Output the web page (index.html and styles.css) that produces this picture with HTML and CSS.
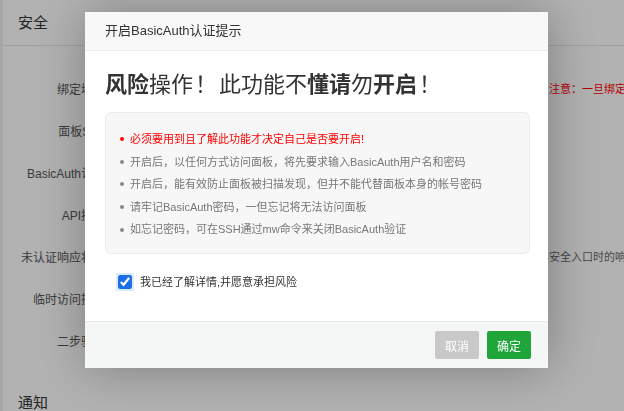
FILE: index.html
```html
<!DOCTYPE html>
<html lang="zh-CN">
<head>
    <meta charset="UTF-8">
    <title>面板设置</title>
    <link rel="stylesheet" href="styles.css">
</head>
<body>
    <div class="page">
        <div class="section">
            <div class="sectionTitle">安全</div>
            <div class="sectionBody">
                <div class="row">
                    <span class="label">绑定域名</span>
                    <span class="field fieldWide"></span>
                    <span class="desc descRed">注意：一旦绑定域名，只能通过域名访问面板！</span>
                </div>
                <div class="row">
                    <span class="label">面板SSL</span>
                </div>
                <div class="row">
                    <span class="label">BasicAuth认证</span>
                </div>
                <div class="row">
                    <span class="label">API接口</span>
                </div>
                <div class="row">
                    <span class="label">未认证响应状态</span>
                    <span class="field fieldSelect"></span>
                    <span class="desc">未登录或访问非安全入口时的响应状态</span>
                </div>
                <div class="row">
                    <span class="label">临时访问授权</span>
                </div>
                <div class="row">
                    <span class="label">二步验证</span>
                </div>
            </div>
        </div>
        <div class="section">
            <div class="sectionTitle">通知</div>
        </div>
    </div>

    <div class="shade"></div>

    <div class="layer">
        <div class="layerTitle">开启BasicAuth认证提示</div>
        <div class="layerContent">
            <h1 class="warnHeader"><b>风险</b>操作<span class="bang">！</span>此功能不<b>懂请</b>勿<b>开启</b><span class="bang">！</span></h1>
            <ul class="tips">
                <li class="tipRed">必须要用到且了解此功能才决定自己是否要开启!</li>
                <li>开启后，以任何方式访问面板，将先要求输入BasicAuth用户名和密码</li>
                <li>开启后，能有效防止面板被扫描发现，但并不能代替面板本身的帐号密码</li>
                <li>请牢记BasicAuth密码，一但忘记将无法访问面板</li>
                <li>如忘记密码，可在SSH通过mw命令来关闭BasicAuth验证</li>
            </ul>
            <label class="agree">
                <input type="checkbox" class="agreeBox" checked>
                <span>我已经了解详情,并愿意承担风险</span>
            </label>
        </div>
        <div class="layerFooter">
            <button class="btn btnCancel">取消</button>
            <button class="btn btnOk">确定</button>
        </div>
    </div>
</body>
</html>
```

FILE: styles.css
```css
html, body {
    margin: 0;
    padding: 0;
}
body {
    background-color: #f0f0f0;
    color: #333333;
    font-family: "Liberation Sans", "Noto Sans CJK SC", sans-serif;
    font-size: 12px;
    height: 411px;
    overflow: hidden;
}
.page {
    margin-left: 3px;
    background-color: #ffffff;
    height: 411px;
}
.sectionTitle {
    border-bottom: 1px solid #e6e6e6;
    font-size: 15px;
    height: 45px;
    line-height: 45px;
    padding-left: 15px;
}
.sectionBody {
    padding: 21px 0 19px 0;
}
.row {
    align-items: center;
    display: flex;
    height: 42px;
}
.row > span {
    flex-shrink: 0;
}
.label {
    color: #555555;
    text-align: right;
    width: 102px;
}
.field {
    border: 1px solid #e6e6e6;
    box-sizing: border-box;
    height: 28px;
    margin-left: 15px;
}
.fieldWide {
    width: 419px;
}
.fieldSelect {
    width: 342px;
}
.desc {
    color: #666666;
    font-size: 11px;
    margin-left: 10px;
    white-space: nowrap;
}
.descRed {
    color: #ff0000;
}

.shade {
    background-color: rgba(0, 0, 0, 0.3);
    inset: 0;
    position: fixed;
}
.layer {
    background-color: #ffffff;
    box-shadow: 1px 1px 50px rgba(0, 0, 0, 0.3);
    display: flex;
    flex-direction: column;
    height: 356px;
    left: 85px;
    position: fixed;
    top: 12px;
    width: 463px;
}
.layerTitle {
    background-color: #f8f8f8;
    border-bottom: 1px solid #eeeeee;
    color: #333333;
    font-size: 13px;
    height: 38px;
    line-height: 38px;
    padding-left: 20px;
}
.layerContent {
    flex: 1;
    padding: 16px 18px 0 20px;
}
.warnHeader {
    color: #333333;
    font-family: "Noto Sans CJK SC", sans-serif;
    font-size: 22px;
    font-weight: normal;
    line-height: 30px;
    margin: 0 0 15px 0;
}
.warnHeader b {
    font-weight: bold;
}
.bang {
    display: inline-block;
    text-align: center;
    width: 26px;
}
.tips {
    background-color: #f7f7f7;
    border: 1px solid #ececec;
    border-radius: 6px;
    font-size: 11px;
    list-style: none;
    margin: 0;
    padding: 15px 0 12px 14px;
}
.tips li {
    align-items: center;
    color: #777777;
    display: flex;
    line-height: 22.6px;
}
.tips li::before {
    background-color: #888888;
    border-radius: 50%;
    content: "";
    height: 4px;
    margin-right: 6px;
    width: 4px;
}
.tips .tipRed {
    color: #ff0000;
}
.tips .tipRed::before {
    background-color: #ff0000;
}
.agree {
    align-items: center;
    display: flex;
    font-size: 11px;
    line-height: 20px;
    margin: 18px 0 0 13px;
}
.agreeBox {
    accent-color: #1a6fe6;
    height: 14px;
    margin: 0 8px 0 0;
    outline: 2px solid rgba(30, 111, 230, 0.15);
    width: 14px;
}
.layerFooter {
    background-color: #f5f6f6;
    border-top: 1px solid #e9e9e9;
    display: flex;
    gap: 8px;
    justify-content: flex-end;
    padding: 9px 17px 0 0;
    height: 37px;
}
.btn {
    border: none;
    border-radius: 2px;
    color: #ffffff;
    font-family: "Liberation Sans", "Noto Sans CJK SC", sans-serif;
    font-size: 12px;
    height: 28px;
    padding: 0;
    width: 44px;
}
.btnCancel {
    background-color: #c9c9c9;
}
.btnOk {
    background-color: #20a53a;
}
```
